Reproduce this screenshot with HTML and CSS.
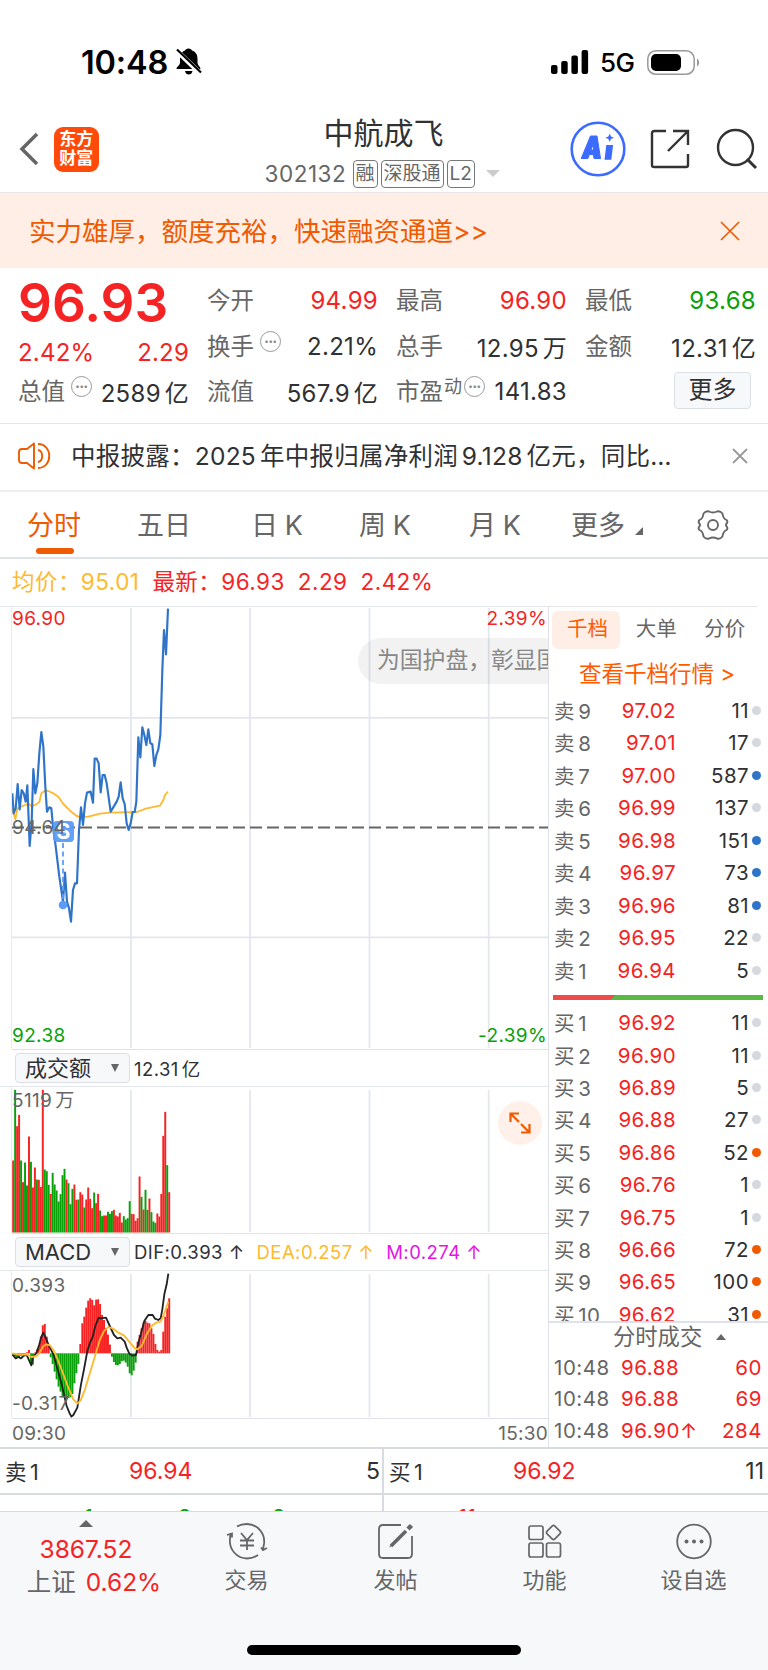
FILE: index.html
```html
<!DOCTYPE html>
<html lang="zh-CN">
<head>
  <meta charset="UTF-8">
  <meta name="viewport" content="width=device-width, initial-scale=1.0">
  <title>中航成飞 302132</title>
  <link rel="stylesheet" href="styles.css">
</head>
<body>

  <div class="status-bar">
    <span class="clock">10:48</span>
    <svg class="bell" width="28" height="30" viewBox="0 0 28 30">
      <path d="M13.500 1.500c-2 0-3 1-3.500 2-3.500 1.200-5 4.500-5 8v4c0 3-3.500 4-3.500 6.500h24c0-2.500-3-3.500-3-6.500v-4c0-3.500-1.500-6.800-5.500-8-.5-1-1.500-2-3.500-2zM10 24h7.500c-.5 2.400-1.800 3.500-3.700 3.500S10.500 26.400 10 24z"/>
      <path d="M1 3l25 24" stroke="#fff" stroke-width="5"/>
      <path d="M2 2.500l24 23" stroke="#000" stroke-width="2.200"/>
    </svg>
    <svg class="signal" width="38" height="24" viewBox="0 0 38 24">
      <rect x="0" y="15" width="6.500" height="9" rx="2"/>
      <rect x="10.200" y="11" width="6.500" height="13" rx="2"/>
      <rect x="20.400" y="5.500" width="6.500" height="18.500" rx="2"/>
      <rect x="30.600" y="0" width="6.500" height="24" rx="2"/>
    </svg>
    <span class="net">5G</span>
    <svg class="battery" width="53" height="25" viewBox="0 0 53 25">
      <rect x=".8" y=".8" width="46.400" height="23.400" rx="8" fill="none" stroke="#999" stroke-width="1.500"/>
      <rect x="4" y="4" width="30" height="17" rx="5"/>
      <path d="M50 8.500c2.800 1.500 2.800 6.500 0 8z" fill="#999"/>
    </svg>
  </div>

  <header class="nav">
    <svg class="back" width="20" height="34" viewBox="0 0 20 34"><path d="M18 2L3 17l15 15" fill="none" stroke="#666" stroke-width="3.500"/></svg>
    <div class="logo">东方<br>财富</div>
    <div class="stock">
      <h1>中航成飞</h1>
      <div class="stock-sub">
        <span class="code">302132</span>
        <span class="tag">融</span><span class="tag">深股通</span><span class="tag">L2</span>
        <i class="caret-down"></i>
      </div>
    </div>
    <svg class="ai" width="56" height="56" viewBox="0 0 56 56" fill="#3b6bff">
      <circle cx="28" cy="28" r="26.300" fill="none" stroke="#3b6bff" stroke-width="2.600"/>
      <path fill-rule="evenodd" stroke="#3b6bff" stroke-linejoin="round" d="M20.500 15h6.500l3.500 22.500h-6.500l-.6-4h-4l-1.500 4h-6.700zM21 29h2.600l-.5-5.500z"/>
      <path d="M36.300 24h6.800l-1.800 14.800h-6.800zM39.700 12.500l1.300 3 3 1.300-3 1.300-1.300 3-1.300-3-3-1.300 3-1.300z"/>
    </svg>
    <svg class="share" width="40" height="40" viewBox="0 0 40 40" fill="none" stroke="#333" stroke-width="2.400">
      <path d="M16 2H4.500Q2 2 2 4.500v32Q2 38 4.500 38h31.500Q38 38 38 36V25"/>
      <path d="M23 2h15v14M38 2L18 22"/>
    </svg>
    <svg class="search" width="42" height="42" viewBox="0 0 42 42" fill="none" stroke="#333" stroke-width="2.400">
      <circle cx="19.500" cy="19.500" r="17.500"/><path d="M31 31l9 9" stroke-width="3"/>
    </svg>
  </header>

  <div class="banner">
    <span>实力雄厚，额度充裕，快速融资通道&gt;&gt;</span>
    <svg width="20" height="20" viewBox="0 0 20 20"><path d="M1 1l18 18M19 1L1 19" stroke="#f05a00" stroke-width="1.700"/></svg>
  </div>

  <section class="quote">
    <div class="col price-col">
      <div class="price">96.93</div>
      <div class="change"><span>2.42%</span><span>2.29</span></div>
      <div class="cell"><label>总值</label><i class="more-dot">•••</i><b>2589<s></s>亿</b></div>
    </div>
    <div class="col">
      <div class="cell"><label>今开</label><b class="up">94.99</b></div>
      <div class="cell"><label>换手</label><i class="more-dot">•••</i><b>2.21%</b></div>
      <div class="cell"><label>流值</label><b>567.9<s></s>亿</b></div>
    </div>
    <div class="col">
      <div class="cell"><label>最高</label><b class="up">96.90</b></div>
      <div class="cell"><label>总手</label><b>12.95<s></s>万</b></div>
      <div class="cell"><label>市盈<sup>动</sup></label><i class="more-dot pe">•••</i><b>141.83</b></div>
    </div>
    <div class="col">
      <div class="cell"><label>最低</label><b class="down">93.68</b></div>
      <div class="cell"><label>金额</label><b>12.31<s></s>亿</b></div>
      <div class="cell"><button class="more-btn">更多</button></div>
    </div>
  </section>

  <div class="notice">
    <svg width="34" height="28" viewBox="0 0 34 28" fill="none" stroke="#f05a00" stroke-width="1.900">
      <path d="M16 1.500v25L9 21H4q-3 0-3-3v-8q0-3 3-3h5z" stroke-linejoin="round"/>
      <path d="M20 8c5.500 1 5.500 11 0 12M20 2c15 0 15 24 0 24"/>
    </svg>
    <p>中报披露：<span>2025<s></s>年中报归属净利润<s></s>9.128<s></s>亿元，同比…</span></p>
    <svg class="close" width="16" height="16" viewBox="0 0 16 16"><path d="M1 1l14 14M15 1L1 15" stroke="#999" stroke-width="1.800"/></svg>
  </div>

  <nav class="tabs">
    <a class="active">分时</a>
    <a>五日</a>
    <a>日<s></s>K</a>
    <a>周<s></s>K</a>
    <a>月<s></s>K</a>
    <a class="tab-more">更多<i></i></a>
    <svg width="32" height="30" viewBox="0 0 32 30" fill="none" stroke="#666" stroke-width="1.900">
      <path d="M12 1.500Q16 3.500 20 1.500Q23 .5 25.500 3.500Q26 8.500 29.500 10Q31 11.500 30 13Q28 15 30 17Q31 18.500 29.500 20Q26 21.500 25.500 26.500Q23 29.500 20 28.500Q16 26.500 12 28.500Q9 29.500 6.500 26.500Q6 21.500 2.500 20Q1 18.500 2 17Q4 15 2 13Q1 11.500 2.500 10Q6 8.500 6.500 3.500Q9 .5 12 1.500Z" stroke-linejoin="round"/>
      <circle cx="16" cy="15" r="5"/>
    </svg>
  </nav>

  <div class="legend">
    <span class="avg">均价：<em>95.01</em></span>
    <span>最新：<em>96.93</em></span>
    <span>2.29</span>
    <span>2.42%</span>
  </div>

  <main class="board">
    <div class="charts">
      <div class="plot plot-price">
        <svg width="549" height="443" viewBox="0 6 549 443">
          <g class="grid">
            <path d="M12 117.800h537M12 337.300h537"/>
            <path d="M131 8v440M250 8v440M369.500 8v440M488.700 8v440"/>
          </g>
          <path class="mid" d="M12 227.500h537"/>
          <g transform="scale(.33333)" fill="none" stroke-linejoin="round">
            <path class="line-avg" d="M37 625L46 658L52 625L75 615L85 611L95 619L110 612L118 606L124 580L135 572L145 573L160 580L175 590L190 612L210 632L230 648L240 651L265 650L300 641L330 638L410 636L440 625L480 617L490 600L495 585L504 575"/>
            <path class="line-price" d="M37 580L41 640L47 625L53 552L59 628L65 570L71 580L77 605L82 556L89 738L95 665L100 507L106 580L112 550L118 460L124 396L130 440L136 560L141 635L148 622L154 625L160 690L166 730L178 830L189 905L195 818L201 905L207 925L213 965L219 870L225 850L231 850L237 690L243 622L249 675L255 610L261 578L272 575L279 608L284 476L290 476L296 490L302 577L308 525L314 525L320 550L332 635L338 625L350 605L356 590L362 547L368 595L374 612L380 670L386 690L392 670L398 636L404 636L409 605L415 412L421 472L427 382L433 405L439 435L445 388L451 430L457 433L463 498L469 465L475 448L481 405L487 210L492 90L498 163L504 26"/>
          </g>
          <rect x="53" y="221" width="21" height="21" rx="4" fill="#5b9cf8" opacity=".95"/>
          <text x="63.500" y="239" class="sell-mark">S</text>
          <path d="M63 243v60" stroke="#5b9cf8" stroke-width="1.800" stroke-dasharray="5 3.500"/>
          <circle cx="63" cy="305" r="4.300" fill="#5b9cf8"/>
        </svg>
        <span class="ax top-left up">96.90</span>
        <span class="ax top-right up">2.39%</span>
        <span class="ax middle">94.64</span>
        <span class="ax bottom-left down">92.38</span>
        <span class="ax bottom-right down">-2.39%</span>
        <div class="bullet">为国护盘，彰显国</div>
      </div>

      <div class="indicator first">
        <button class="picker">成交额<i></i></button>
        <span>12.31<s></s>亿</span>
      </div>

      <div class="plot plot-volume">
        <svg width="549" height="147" viewBox="0 0 549 147">
          <path class="grid" d="M131 3v142M250 3v142M369.500 3v142M488.700 3v142"/>
          <g id="volume"></g>
        </svg>
        <span class="ax vol-max">5119<s></s>万</span>
        <span class="expand">
          <svg width="24" height="24" viewBox="0 0 24 24" fill="none" stroke="#f05a00" stroke-width="2.200">
            <path d="M2.500 11V2.500h8.500M3 3l8 8M21.500 13v8.500h-8.500M21 21l-8-8"/>
          </svg>
        </span>
      </div>

      <div class="indicator">
        <button class="picker">MACD<i></i></button>
        <span>DIF:0.393 ↑</span>
        <span class="dea">DEA:0.257 ↑</span>
        <span class="macd">M:0.274 ↑</span>
      </div>

      <div class="plot plot-macd">
        <svg width="549" height="148" viewBox="0 240 549 148">
          <path class="grid" d="M131 243v143M250 243v143M369.500 243v143M488.700 243v143"/>
          <g id="macd"></g>
          <g transform="scale(.33333)" fill="none" stroke-linejoin="round">
            <path class="line-dif" d="M37 970L47 982L55 978L63 982L70 975L80 972L88 990L94 1003L99 978L110 965L118 940L124 918L130 905L137 920L145 940L160 970L170 1005L185 1060L200 1125L208 1145L214 1157L220 1152L232 1130L243 1060L252 1015L262 960L270 935L278 918L286 885L296 860L303 862L318 860L328 882L342 912L352 922L362 920L374 932L380 950L388 968L398 974L408 972L414 940L425 900L433 870L445 852L458 852L465 863L475 867L482 862L487 835L493 790L500 760L505 728"/>
            <path class="line-avg" d="M37 967L60 971L80 970L95 978L110 975L118 966L130 945L140 940L150 943L162 960L175 990L190 1030L205 1070L220 1105L232 1118L242 1108L255 1075L270 1025L285 975L300 925L312 900L325 888L340 893L355 905L372 913L390 935L405 952L412 955L425 945L440 910L455 885L468 875L482 872L492 850L505 812"/>
          </g>
        </svg>
        <span class="ax macd-max">0.393</span>
        <span class="ax macd-min">-0.317</span>
      </div>

      <div class="times"><span>09:30</span><span>15:30</span></div>
    </div>

    <aside class="depth">
      <div class="depth-tabs"><a class="on">千档</a><a>大单</a><a>分价</a></div>
      <a class="depth-link">查看千档行情 &gt;</a>
      <ul class="orders">
        <li><span>卖<s></s>9</span><b>97.02</b><em>11</em><i></i></li>
        <li><span>卖<s></s>8</span><b>97.01</b><em>17</em><i></i></li>
        <li><span>卖<s></s>7</span><b>97.00</b><em>587</em><i class="blue"></i></li>
        <li><span>卖<s></s>6</span><b>96.99</b><em>137</em><i></i></li>
        <li><span>卖<s></s>5</span><b>96.98</b><em>151</em><i class="blue"></i></li>
        <li><span>卖<s></s>4</span><b>96.97</b><em>73</em><i class="blue"></i></li>
        <li><span>卖<s></s>3</span><b>96.96</b><em>81</em><i class="blue"></i></li>
        <li><span>卖<s></s>2</span><b>96.95</b><em>22</em><i></i></li>
        <li><span>卖<s></s>1</span><b>96.94</b><em>5</em><i></i></li>
      </ul>
      <div class="ratio"></div>
      <ul class="orders bids">
        <li><span>买<s></s>1</span><b>96.92</b><em>11</em><i></i></li>
        <li><span>买<s></s>2</span><b>96.90</b><em>11</em><i></i></li>
        <li><span>买<s></s>3</span><b>96.89</b><em>5</em><i></i></li>
        <li><span>买<s></s>4</span><b>96.88</b><em>27</em><i></i></li>
        <li><span>买<s></s>5</span><b>96.86</b><em>52</em><i class="orange"></i></li>
        <li><span>买<s></s>6</span><b>96.76</b><em>1</em><i></i></li>
        <li><span>买<s></s>7</span><b>96.75</b><em>1</em><i></i></li>
        <li><span>买<s></s>8</span><b>96.66</b><em>72</em><i class="orange"></i></li>
        <li><span>买<s></s>9</span><b>96.65</b><em>100</em><i class="orange"></i></li>
        <li><span>买<s></s>10</span><b>96.62</b><em>31</em><i class="orange"></i></li>
      </ul>
      <div class="trades-title">分时成交<i></i></div>
      <ul class="trades">
        <li><span>10:48</span><b>96.88</b><em>60</em></li>
        <li><span>10:48</span><b>96.88</b><em>69</em></li>
        <li><span>10:48</span><b>96.90↑</b><em>284</em></li>
      </ul>
    </aside>
  </main>

  <section class="best">
    <div class="best-cell"><span>卖<s></s>1</span><b>96.94</b><em>5</em></div>
    <div class="best-cell"><span>买<s></s>1</span><b>96.92</b><em>11</em></div>
  </section>
  <!-- next row, mostly hidden behind the bottom bar -->
  <section class="best peek">
    <div class="peek-cell down"><span>1</span><span>2</span><span>2</span></div>
    <div class="peek-cell up"><span>11</span></div>
  </section>

  <footer class="toolbar">
    <div class="index">
      <i class="caret-up"></i>
      <b>3867.52</b>
      <p>上证 <b>0.62%</b></p>
    </div>
    <a>
      <svg width="42" height="38" viewBox="0 0 42 38" fill="none" stroke="#666" stroke-width="1.800">
        <path d="M11 4.500Q15 2 21 2a17.500 17.500 0 0 1 17 20l-1 5M35 25.500l2 2.500 4-2M32 33Q27 36.500 21 36.500A17.500 17.500 0 0 1 4 17l.5-6M1 13l5-1.500v4"/>
        <path d="M15 11l6 7 6-7M21 18v10M14 18.500h14M14 23.500h14"/>
      </svg>
      交易
    </a>
    <a>
      <svg width="36" height="38" viewBox="0 0 36 38" fill="none" stroke="#666" stroke-width="1.800">
        <path d="M23 3H5Q1 3 1 7v25q0 4 4 4h25q4 0 4-4V14"/>
        <path d="M13 24l15-15" stroke-width="3.600"/><path d="M30 7l3.500-3.500" stroke-width="4.500"/><path d="M14 21l-3 4.500 5-2.500z" fill="#666" stroke="none"/>
      </svg>
      发帖
    </a>
    <a>
      <svg width="34" height="38" viewBox="0 0 34 38" fill="none" stroke="#666" stroke-width="1.700">
        <rect x="1" y="4" width="14" height="13.500" rx="2"/>
        <rect x="1" y="21" width="14" height="14" rx="2"/>
        <rect x="18.500" y="21" width="14" height="14" rx="2"/>
        <rect x="20" y="5" width="11" height="11" rx="2" transform="rotate(45 25.500 10.500)"/>
      </svg>
      功能
    </a>
    <a>
      <svg width="38" height="38" viewBox="0 0 38 38">
        <circle cx="19" cy="19.500" r="16.800" fill="none" stroke="#666" stroke-width="1.800"/>
        <g fill="#666"><circle cx="11.500" cy="19.500" r="2"/><circle cx="19" cy="19.500" r="2"/><circle cx="26.500" cy="19.500" r="2"/></g>
      </svg>
      设自选
    </a>
    <span class="home-bar"></span>
  </footer>

  <script src="script.js"></script>
</body>
</html>
```
FILE: styles.css
```css
* {
  margin: 0;
  padding: 0;
  box-sizing: border-box;
}

body {
  width: 768px;
  height: 1670px;
  overflow: hidden;
  background: #fff;
  color: #303133;
  font-family: Inter, "Noto Sans CJK SC", sans-serif;
  font-weight: 390;
  -webkit-font-smoothing: antialiased;
}

ul {
  list-style: none;
}

i, em {
  font-style: normal;
}

b {
  font-weight: inherit;
}

svg {
  display: block;
  flex: none;
}

/* small gap between digits and Chinese characters */
s {
  display: inline-block;
  width: .16em;
}

.up {
  color: #f52323;
}

.down {
  color: #0aa00a;
}

/* status bar */
.status-bar {
  display: flex;
  align-items: center;
  height: 102px;
  padding: 22px 0 0 81px;
}

.clock {
  width: 94px;
  font-size: 32.500px;
  font-weight: 600;
  letter-spacing: -.2px;
  color: #000;
}

.signal {
  margin-left: 348px;
}

.net {
  width: 47px;
  margin-left: 11px;
  color: #000;
  font-size: 26px;
  font-weight: 500;
  letter-spacing: -.5px;
}

/* header */
.nav {
  display: flex;
  align-items: center;
  height: 91px;
  padding: 4px 10px 0 19px;
  border-bottom: 1px solid #e8e8e8;
}

.logo {
  width: 45px;
  height: 45px;
  margin-left: 15px;
  padding-top: 3px;
  border-radius: 9px;
  background: #ff4a0a;
  color: #fff;
  font-size: 17px;
  font-weight: 700;
  line-height: 19px;
  text-align: center;
}

.stock {
  width: 260px;
  margin: 10px 0 0 158px;
}

.stock h1 {
  height: 39px;
  padding-left: 67px;
  font-size: 30px;
  font-weight: inherit;
  line-height: 34px;
}

.stock-sub {
  display: flex;
  align-items: center;
  height: 38px;
  padding-left: 8px;
  white-space: nowrap;
}

.code {
  width: 88px;
  color: #666;
  font-size: 22.500px;
  letter-spacing: .5px;
}

.tag {
  height: 28px;
  margin-right: 3px;
  padding: 0 2px;
  border: 1px solid #777;
  border-radius: 4px;
  color: #666;
  font-size: 19px;
  line-height: 25px;
}

.caret-down {
  margin-left: 8px;
  border: 7px solid transparent;
  border-top-color: #ccc;
  border-bottom: 0;
}

.ai {
  margin-left: 56px;
}

.share {
  margin-left: 24px;
}

.search {
  margin-left: 26px;
}

/* promo banner */
.banner {
  display: flex;
  align-items: center;
  justify-content: space-between;
  height: 75px;
  padding: 0 28px 0 29px;
  background: #ffeee6;
  color: #f05a00;
  font-size: 26.500px;
}

.banner span {
  padding-bottom: 3px;
}

/* quote */
.quote {
  display: flex;
  gap: 18px;
  height: 156px;
  padding: 10px 0 0 18px;
  border-bottom: 1px solid #e6e6e6;
}

.col {
  width: 171px;
}

.cell {
  display: flex;
  align-items: center;
  height: 45.500px;
  font-size: 24px;
  letter-spacing: .3px;
  white-space: nowrap;
}

.cell label {
  padding-bottom: 3px;
  color: #666;
  font-size: 23.500px;
  letter-spacing: 0;
}

.cell b {
  margin-left: auto;
}

.cell sup {
  position: relative;
  top: -7px;
  margin-left: 1px;
  font-size: 18px;
  line-height: 0;
  vertical-align: baseline;
}

.more-dot {
  width: 21px;
  height: 21px;
  margin: -10px 0 0 6px;
  border: 1.500px solid #999;
  border-radius: 50%;
  color: #888;
  font-size: 8px;
  line-height: 18px;
  text-align: center;
  letter-spacing: -.3px;
}

.more-dot.pe {
  margin-left: 2px;
}

.price {
  height: 52px;
  color: #f52323;
  font-size: 53px;
  font-weight: 600;
  line-height: 50px;
}

.change {
  display: flex;
  justify-content: space-between;
  height: 39px;
  color: #f52323;
  font-size: 24px;
  letter-spacing: .2px;
  line-height: 46px;
}

.more-btn {
  width: 77px;
  height: 37px;
  margin: -3px 0 0 89px;
  padding-bottom: 1px;
  border: 1px solid #dcdfe6;
  border-radius: 4px;
  background: #f7f8fa;
  color: #303133;
  font: inherit;
  line-height: 32px;
}

/* notice */
.notice {
  display: flex;
  align-items: center;
  height: 68px;
  padding: 0 20px 2px 18px;
  border-bottom: 2px solid #ededed;
}

.notice p {
  margin-left: 19px;
  padding-bottom: 3px;
  font-size: 24.500px;
  letter-spacing: .25px;
  white-space: nowrap;
}

.close {
  margin-left: auto;
}

/* period tabs */
.tabs {
  display: flex;
  align-items: center;
  height: 67px;
  padding-left: 27px;
  border-bottom: 2px solid #dfe2e9;
  color: #666;
  font-size: 27px;
}

.tabs a {
  position: relative;
  width: 110px;
  padding-bottom: 3px;
}

.tabs a:nth-child(2) {
  width: 114px;
}

.tabs a:nth-child(3) {
  width: 108px;
}

.tabs s {
  width: .25em;
}

.tabs .active {
  color: #f05a00;
}

.active::after {
  content: "";
  position: absolute;
  left: 9px;
  bottom: -8px;
  width: 38px;
  height: 6px;
  border-radius: 3px;
  background: #f05a00;
}

.tabs .tab-more {
  width: 126px;
  margin-left: -8px;
}

.tab-more i {
  display: inline-block;
  margin-left: 10px;
  border-left: 8px solid transparent;
  border-bottom: 8px solid #666;
}

.legend {
  display: flex;
  gap: 13px;
  height: 47px;
  padding-left: 12px;
  color: #f52323;
  font-size: 22.500px;
  letter-spacing: .45px;
  line-height: 46px;
  white-space: nowrap;
}

.legend .avg {
  color: #ffb92e;
}

/* charts and order book */
.board {
  display: flex;
  height: 841px;
}

.charts {
  width: 548px;
}

.plot {
  position: relative;
  overflow: hidden;
  border-top: 1px solid #e3e6ec;
}

.plot::before {
  content: "";
  position: absolute;
  top: 0;
  bottom: 0;
  left: 11px;
  border-left: 1px solid #e8eaee;
}

.plot-price {
  height: 443px;
}

.plot-price svg {
  margin-top: -1px;
}

.plot-volume {
  height: 147px;
}

.plot-macd {
  height: 148px;
}

.grid {
  fill: none;
  stroke: #e3e6ee;
  stroke-width: 1.700;
}

.mid {
  stroke: #666;
  stroke-width: 2;
  stroke-dasharray: 12 5;
}

.line-price {
  stroke: #2f74c8;
  stroke-width: 6.500;
}

.line-avg {
  stroke: #ffb92e;
  stroke-width: 5.500;
}

.line-dif {
  stroke: #222;
  stroke-width: 5.500;
}

.sell-mark {
  fill: #fff;
  font-size: 21px;
  font-weight: 700;
  text-anchor: middle;
}

.ax {
  position: absolute;
  left: 12px;
  color: #666;
  font-size: 19px;
  letter-spacing: .35px;
  line-height: 22px;
}

.ax.up {
  color: #f52323;
}

.ax.down {
  color: #0aa00a;
}

.top-left,
.top-right {
  top: 1px;
}

.ax.top-right,
.ax.bottom-right {
  right: 1px;
  left: auto;
}

.middle {
  top: 210px;
}

.bottom-left,
.bottom-right {
  bottom: 2px;
}

.bullet {
  position: absolute;
  top: 31px;
  left: 358px;
  width: 230px;
  height: 46px;
  padding-left: 19px;
  border-radius: 23px;
  background: rgba(0, 0, 0, .05);
  color: #888;
  font-size: 22.800px;
  line-height: 44px;
  white-space: nowrap;
}

.indicator {
  display: flex;
  align-items: center;
  height: 37px;
  margin-left: 12px;
  padding-left: 3px;
  border-top: 1px solid #dfe2e9;
  font-size: 18.500px;
  letter-spacing: .45px;
  white-space: nowrap;
}

.indicator span {
  margin-right: 12px;
}

.indicator .dea {
  color: #ffb92e;
}

.indicator .macd {
  color: #e614e6;
}

.picker {
  display: flex;
  align-items: center;
  justify-content: space-between;
  width: 115px;
  height: 30px;
  margin-right: 4px;
  padding: 0 10px 1px 9px;
  border: 1px solid #dcdfe6;
  border-radius: 4px;
  background: #f7f8fa;
  color: #303133;
  font: inherit;
  font-size: 22px;
  line-height: 26px;
}

.picker i {
  border: 4.500px solid transparent;
  border-top: 8px solid #666;
  border-bottom: 0;
}

.vol-max {
  top: 3px;
}

.expand {
  position: absolute;
  top: 14px;
  left: 498px;
  display: flex;
  align-items: center;
  justify-content: center;
  width: 44px;
  height: 44px;
  border-radius: 50%;
  background: #fff1ea;
}

.macd-max {
  top: 4px;
}

.macd-min {
  bottom: 3px;
}

.times {
  display: flex;
  justify-content: space-between;
  height: 29px;
  margin-left: 12px;
  border-top: 1px solid #dfe2e9;
  color: #666;
  font-size: 19px;
  letter-spacing: .25px;
  line-height: 29px;
}

.depth {
  width: 220px;
  border-left: 1px solid #dfe2e9;
  font-size: 20.500px;
  letter-spacing: .4px;
}

.depth-tabs {
  display: flex;
  gap: 1px;
  width: 208px;
  height: 49px;
  padding: 4px 0 0 3px;
  border-top: 1px solid #e6e6e6;
  color: #666;
  letter-spacing: 0;
  white-space: nowrap;
}

.depth-tabs a {
  width: 71px;
  height: 38px;
  padding-left: 15px;
  line-height: 36px;
}

.depth-tabs .on {
  border-radius: 6px;
  background: #ffeee6;
  color: #ff5a00;
}

.depth-link {
  display: block;
  height: 39px;
  padding-left: 30px;
  color: #ff5a00;
  font-size: 22.500px;
  letter-spacing: 0;
  line-height: 37px;
  white-space: nowrap;
}

.orders li {
  display: grid;
  grid-template-columns: 64px 1fr 70px 9px;
  column-gap: 3px;
  align-items: center;
  height: 32.500px;
  padding: 0 7px 0 5px;
  white-space: nowrap;
}

.orders span {
  padding-bottom: 1px;
}

.orders span,
.trades span {
  color: #666;
}

.orders b,
.trades li,
.best b {
  color: #f52323;
}

.orders b {
  margin-left: -5px;
  text-align: right;
}

.orders em {
  text-align: right;
}

.orders i {
  width: 9px;
  height: 9px;
  border-radius: 50%;
  background: #d5d8de;
}

.orders .blue {
  background: #2f74c8;
}

.orders .orange {
  background: #f05a00;
}

.ratio {
  width: 210px;
  height: 5px;
  margin: 8px 0 7px 4px;
  background: linear-gradient(135deg, #ee4b4b 44px, transparent 44px) #5ab944;
}

.bids {
  height: 314px;
  overflow: hidden;
}

.bids li {
  height: 32.400px;
}

.trades-title {
  height: 31px;
  padding-left: 64px;
  border-top: 2px solid #dfe2e9;
  color: #666;
  font-size: 22.300px;
  letter-spacing: 0;
  line-height: 27px;
}

.trades-title i {
  display: inline-block;
  margin: 0 0 5px 14px;
  border: 5px solid transparent;
  border-top: 0;
  border-bottom: 6px solid #666;
}

.trades li {
  display: flex;
  height: 31.500px;
  padding: 0 6px 0 5px;
  letter-spacing: .55px;
  line-height: 31px;
}

.trades span {
  width: 67px;
}

.trades em {
  margin-left: auto;
}

/* best bid and ask */
.best {
  display: flex;
  height: 46px;
  border-top: 2px solid #d8dbe2;
}

.best-cell {
  display: flex;
  align-items: center;
  width: 384px;
  padding: 0 4px 0 5px;
  font-size: 23px;
}

.best > div:first-child {
  border-right: 2px solid #d8dbe2;
}

.best > .best-cell:first-child {
  padding-right: 2px;
}

.best-cell span {
  width: 124px;
  padding-bottom: 2px;
  font-size: 21.500px;
}

.best-cell em {
  margin-left: auto;
}

.peek {
  height: 18px;
  overflow: hidden;
}

.peek-cell {
  display: flex;
  width: 384px;
  height: 40px;
  padding: 8.500px 0 0 84px;
  font-size: 22px;
}

.peek-cell span {
  width: 94px;
}

.peek-cell.up {
  padding-left: 74px;
}

/* bottom bar */
.toolbar {
  position: relative;
  display: flex;
  height: 159px;
  border-top: 1px solid #d8dbe2;
  background: #f7f8fa;
  color: #666;
  font-size: 22px;
}

.toolbar a {
  display: flex;
  flex-direction: column;
  align-items: center;
  width: 149px;
  padding-top: 10px;
  line-height: 40px;
}

.index {
  display: flex;
  flex-direction: column;
  align-items: center;
  width: 172px;
  padding-top: 8px;
  font-size: 24.500px;
  line-height: 33px;
}

.index p {
  margin-left: 16px;
  white-space: nowrap;
}

.index b {
  color: #f52323;
}

.index p b {
  margin-left: 3px;
}

.caret-up {
  margin-bottom: 6px;
  border: 7px solid transparent;
  border-top: 0;
  border-bottom-color: #666;
}

.home-bar {
  position: absolute;
  bottom: 15px;
  left: 247px;
  width: 274px;
  height: 10px;
  border-radius: 5px;
  background: #000;
}
```
FILE: script.js
```js
const RED = "#f52323";
const GREEN = "#0aa00a";

// volume per minute, negative = falling minute
const volume = [
  216, -428, 319, 353, -216, 151, -210, -141, 288, -212, 135, 195, -159, 158, 137, 428,
  -189, -184, -143, 116, -179, -144, -126, -93, -115, -172, -191, 159, -148, -85, -131, 144,
  98, -99, 121, 114, -75, 99, 135, 101, 73, -120, 88, 116, -66, -49, 51, 51,
  -62, -56, -64, 68, 51, 48, 59, 30, -49, -39, -43, -94, 56, 55, 35, 43,
  168, -107, 69, -128, -68, 102, -61, -33, -29, 57, 48, 116, 290, 362, -202, 121
];

const macd = [
  -3, -10, -12, -12, -8, -6, -3, 3, 10, -25, -34, 2, 12, 22, 50, 84, 88, 50, 22,
  -12, -32, -55, -78, -100, -115, -128, -134, -136, -134, -132, -122, -90, -60, -32,
  28, 90, 110, 137, 158, 165, 160, 144, 161, 162, 148, 115, 100, 76, 56, 26,
  -10, -26, -35, -36, -32, -24, -22, -28, -40, -60, -66, -52, -28,
  35, 55, 75, 92, 97, 92, 90, 75, 58, 28, 10, 5, 10, 65, 110, 135, 165
];

function drawBars(id, values, base, signed) {
  const group = document.getElementById(id);
  values.forEach(function (v, i) {
    const h = Math.abs(v) / 3;
    const bar = document.createElementNS("http://www.w3.org/2000/svg", "rect");
    bar.setAttribute("x", 12.2 + i * 1.975);
    bar.setAttribute("y", signed && v < 0 ? base : base - h);
    bar.setAttribute("width", 1.95);
    bar.setAttribute("height", h);
    bar.setAttribute("fill", v < 0 ? GREEN : RED);
    group.appendChild(bar);
  });
}

drawBars("volume", volume, 145.5, false);
drawBars("macd", macd, 322.3, true);
```
